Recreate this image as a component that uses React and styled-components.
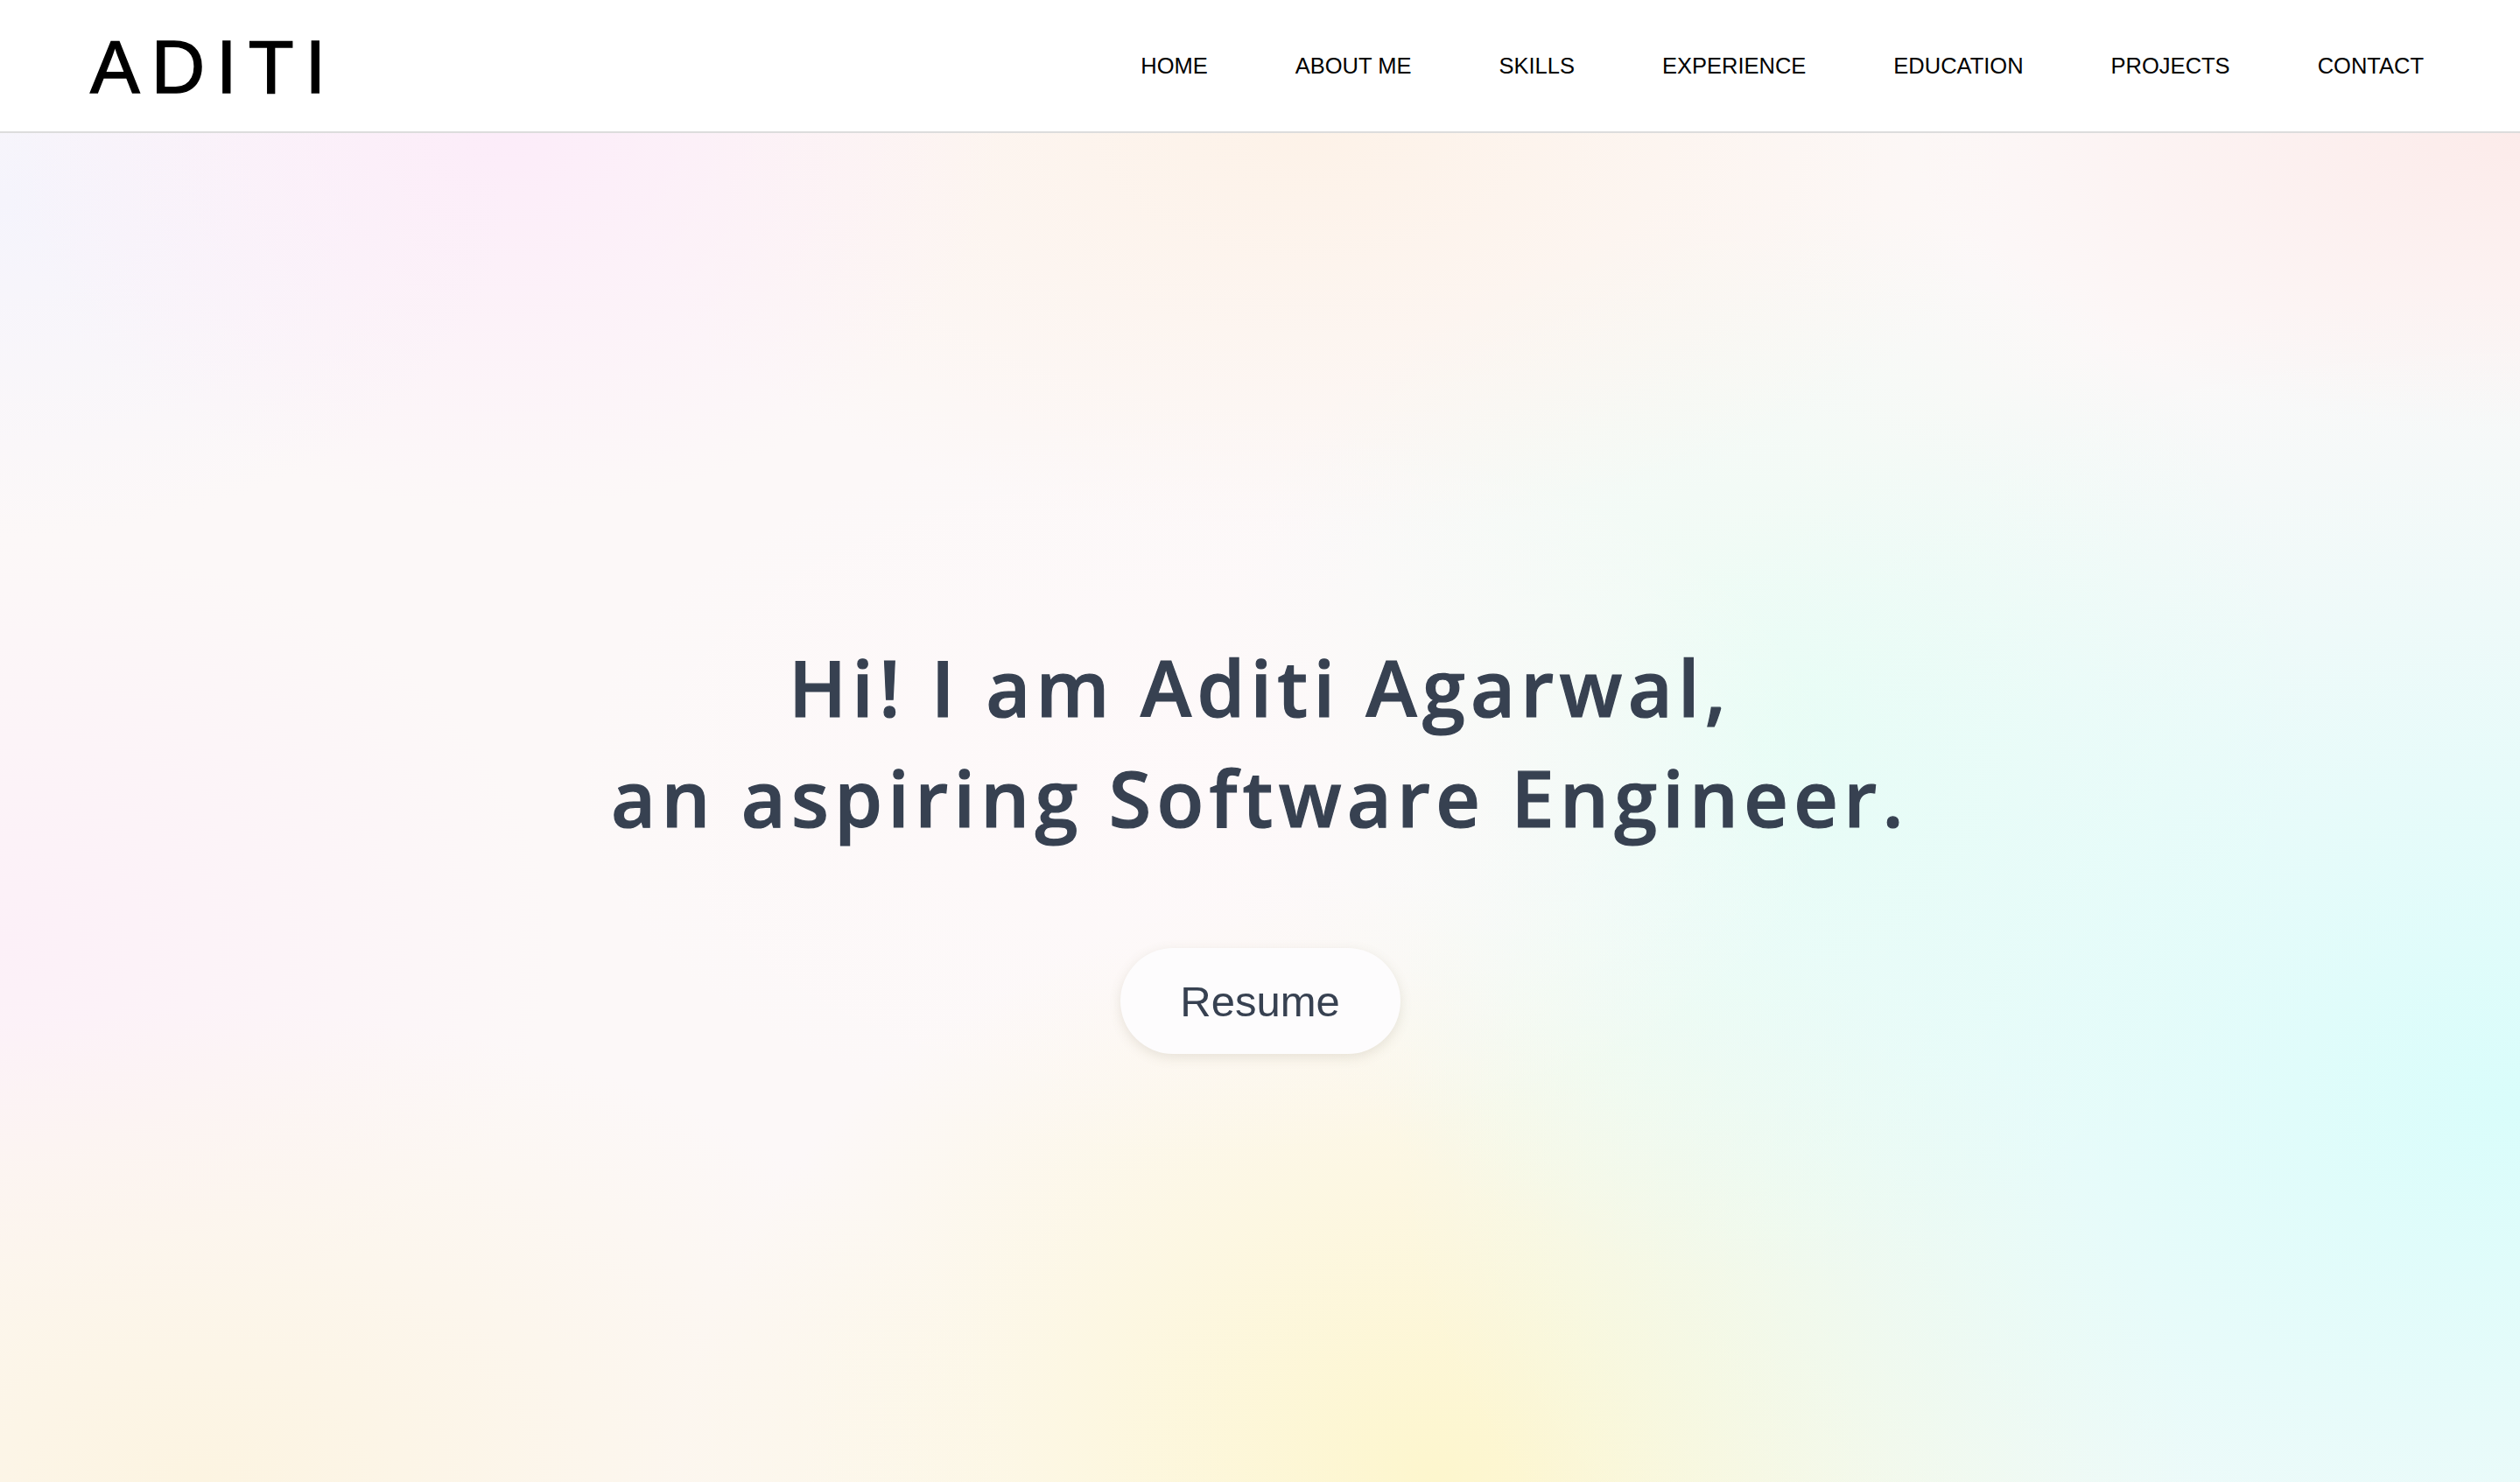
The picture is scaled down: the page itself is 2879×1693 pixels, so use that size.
import React from "react";
import styled, { createGlobalStyle } from "styled-components";

const GlobalStyle = createGlobalStyle`
  * { box-sizing: border-box; }
  html, body { margin: 0; padding: 0; }
  body { font-family: "Liberation Sans", Arial, sans-serif; background: #ffffff; }
`;

const Page = styled.div`
  display: flex;
  flex-direction: column;
  min-height: 1693px;
`;

const NavBar = styled.header`
  height: 152px;
  display: flex;
  align-items: center;
  justify-content: space-between;
  padding: 0 60px 0 103px;
  background: #ffffff;
  border-bottom: 2px solid #dcdcdc;
`;

const Logo = styled.div`
  font-family: "Liberation Sans", Arial, sans-serif;
  font-size: 85px;
  font-weight: 400;
  letter-spacing: 13px;
  color: #000;
  line-height: 1;
  -webkit-text-stroke: 1.4px #000;
  margin-top: 3px;
`;

const NavList = styled.nav`
  display: flex;
  align-items: center;
  margin-top: 2px;
`;

const NavLink = styled.a`
  font-family: "Liberation Sans", Arial, sans-serif;
  font-size: 25.5px;
  color: #000;
  text-decoration: none;
  padding: 0 50px;
  line-height: 1;
`;

const Hero = styled.main`
  flex: 1;
  display: flex;
  flex-direction: column;
  align-items: center;
  padding-top: 570px;
  background:
    radial-gradient(ellipse 26% 28% at 47% 48%, rgba(254, 249, 250, 0.85), rgba(254, 249, 250, 0)),
    radial-gradient(ellipse 20% 28% at 20% 0%, #fcecf9, rgba(252, 236, 249, 0)),
    radial-gradient(ellipse 28% 30% at 52% 0%, #fdf2e8, rgba(253, 242, 232, 0)),
    radial-gradient(ellipse 24% 22% at 100% 0%, #fcebea, rgba(252, 235, 234, 0)),
    radial-gradient(ellipse 45% 60% at 100% 72%, #d9fdfb, rgba(217, 253, 251, 0)),
    radial-gradient(ellipse 22% 40% at 70% 45%, rgba(234, 253, 244, 0.95), rgba(234, 253, 244, 0)),
    radial-gradient(ellipse 30% 45% at 57% 100%, #fdf6cd, rgba(253, 246, 205, 0)),
    radial-gradient(ellipse 32% 35% at 8% 100%, #fcf4e1, rgba(252, 244, 225, 0)),
    radial-gradient(ellipse 22% 30% at 0% 60%, #fcf0f8, rgba(252, 240, 248, 0)),
    radial-gradient(ellipse 20% 25% at 0% 5%, #f5f4fc, rgba(245, 244, 252, 0)),
    #fcf8f8;
`;

const Heading = styled.h1`
  margin: 0;
  font-family: "Open Sans", "Noto Sans", sans-serif;
  font-weight: 600;
  font-size: 88px;
  line-height: 126px;
  letter-spacing: 6.3px;
  color: #374151;
  -webkit-text-stroke: 1.2px #374151;
  text-align: center;
`;

const ResumeButton = styled.a`
  margin-top: 109px;
  width: 320px;
  height: 121px;
  border-radius: 61px;
  background: #fdfcfd;
  box-shadow: 0 4px 14px rgba(120, 110, 80, 0.16);
  display: flex;
  align-items: center;
  justify-content: center;
  font-family: "Liberation Sans", Arial, sans-serif;
  font-size: 49px;
  color: #374151;
  text-decoration: none;
`;

const navItems = ["HOME", "ABOUT ME", "SKILLS", "EXPERIENCE", "EDUCATION", "PROJECTS", "CONTACT"];

export default function App() {
  return (
    <Page>
      <GlobalStyle />
      <NavBar>
        <Logo>ADITI</Logo>
        <NavList>
          {navItems.map((item) => (
            <NavLink key={item} href="#">{item}</NavLink>
          ))}
        </NavList>
      </NavBar>
      <Hero>
        <Heading>
          Hi! I am Aditi Agarwal,
          <br />
          an aspiring Software Engineer.
        </Heading>
        <ResumeButton href="#">Resume</ResumeButton>
      </Hero>
    </Page>
  );
}
